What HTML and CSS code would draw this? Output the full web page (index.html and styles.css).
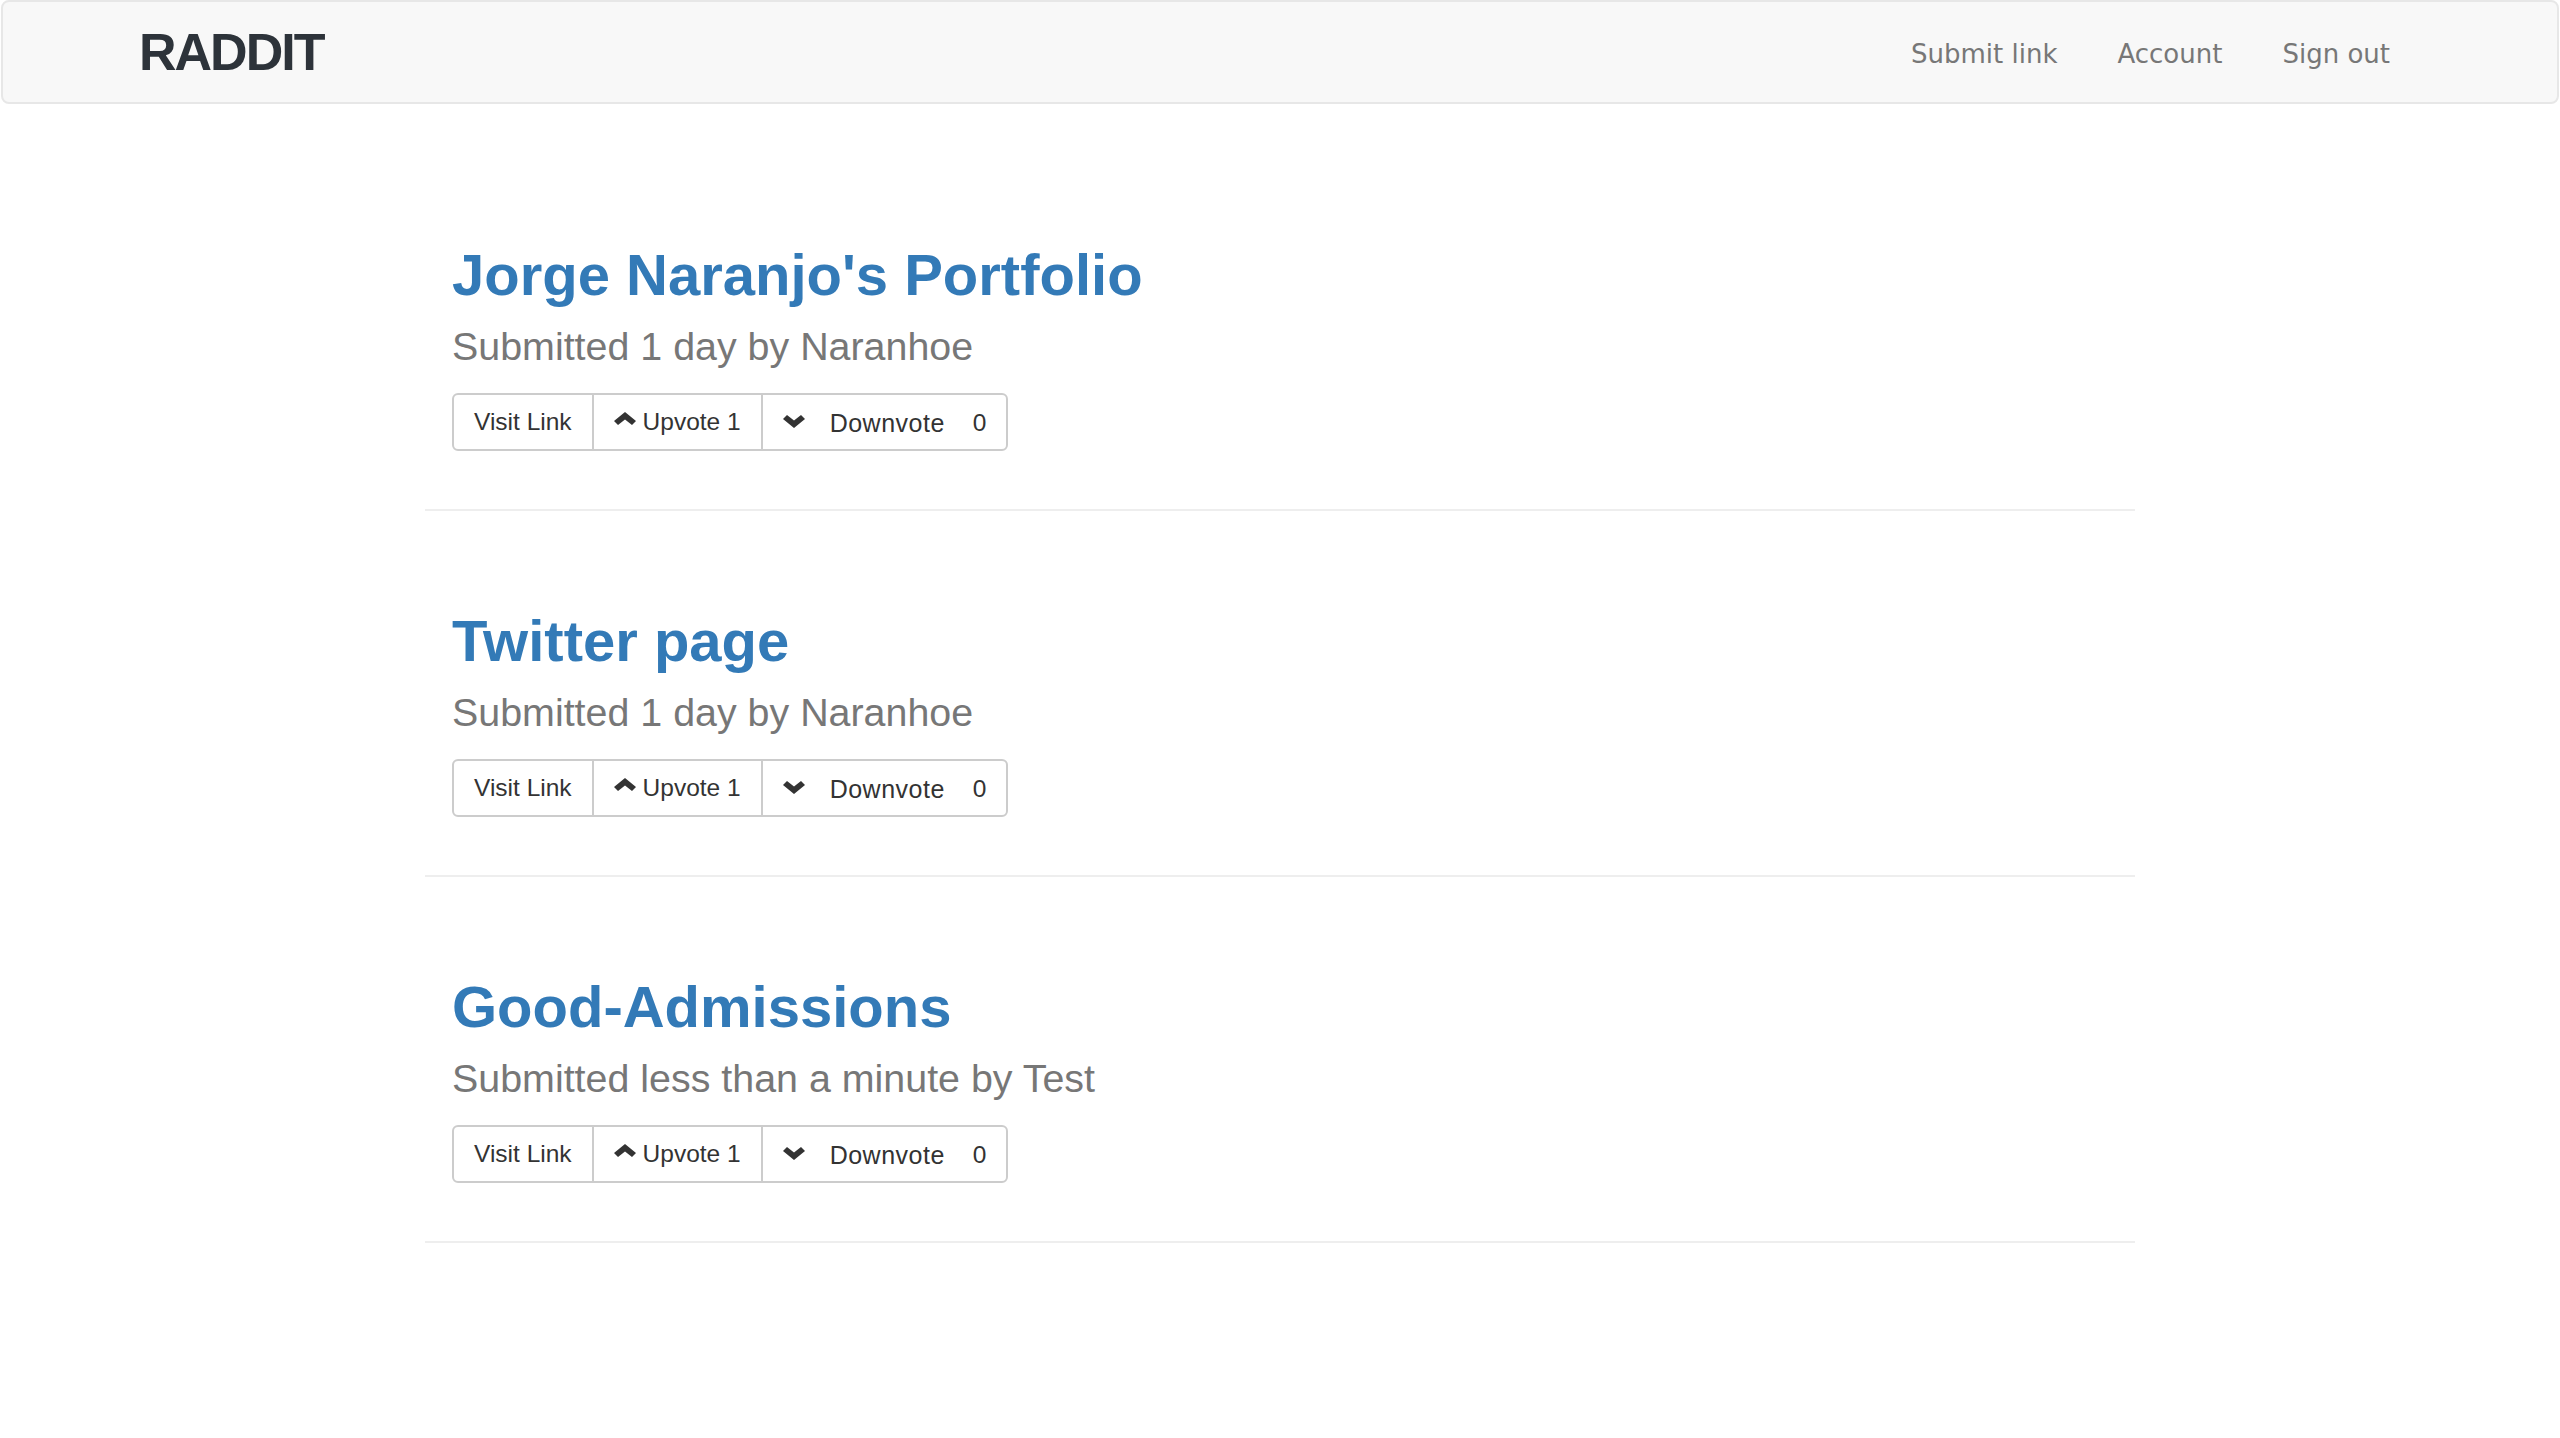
FILE: index.html
```html
<!DOCTYPE html>
<html lang="en">
<head>
<meta charset="utf-8">
<title>Raddit</title>
<link rel="stylesheet" href="styles.css">
</head>
<body>
<nav class="navbar">
  <a class="brand" href="#">RADDIT</a>
  <ul class="nav-links">
    <li><a href="#">Submit link</a></li>
    <li><a href="#">Account</a></li>
    <li><a href="#">Sign out</a></li>
  </ul>
</nav>
<main class="posts">
  <article class="post">
    <h2 class="post-title"><a href="#">Jorge Naranjo's Portfolio</a></h2>
    <p class="post-meta">Submitted 1 day by Naranhoe</p>
    <div class="btn-group">
      <a class="btn" href="#">Visit Link</a>
      <a class="btn" href="#"><svg class="chev chev-up" viewBox="0 0 22 13" width="22" height="13"><polygon points="11,0 22,9 18,13 11,7.5 4,13 0,9"/></svg>Upvote 1</a>
      <a class="btn" href="#"><svg class="chev chev-down" viewBox="0 0 22 13" width="22" height="13"><polygon points="11,13 22,4 18,0 11,5.5 4,0 0,4"/></svg><span class="down-label">Downvote</span><span class="count">0</span></a>
    </div>
  </article>
  <article class="post">
    <h2 class="post-title"><a href="#">Twitter page</a></h2>
    <p class="post-meta">Submitted 1 day by Naranhoe</p>
    <div class="btn-group">
      <a class="btn" href="#">Visit Link</a>
      <a class="btn" href="#"><svg class="chev chev-up" viewBox="0 0 22 13" width="22" height="13"><polygon points="11,0 22,9 18,13 11,7.5 4,13 0,9"/></svg>Upvote 1</a>
      <a class="btn" href="#"><svg class="chev chev-down" viewBox="0 0 22 13" width="22" height="13"><polygon points="11,13 22,4 18,0 11,5.5 4,0 0,4"/></svg><span class="down-label">Downvote</span><span class="count">0</span></a>
    </div>
  </article>
  <article class="post">
    <h2 class="post-title"><a href="#">Good-Admissions</a></h2>
    <p class="post-meta">Submitted less than a minute by Test</p>
    <div class="btn-group">
      <a class="btn" href="#">Visit Link</a>
      <a class="btn" href="#"><svg class="chev chev-up" viewBox="0 0 22 13" width="22" height="13"><polygon points="11,0 22,9 18,13 11,7.5 4,13 0,9"/></svg>Upvote 1</a>
      <a class="btn" href="#"><svg class="chev chev-down" viewBox="0 0 22 13" width="22" height="13"><polygon points="11,13 22,4 18,0 11,5.5 4,0 0,4"/></svg><span class="down-label">Downvote</span><span class="count">0</span></a>
    </div>
  </article>
</main>
</body>
</html>
```

FILE: styles.css
```css
html, body {
  margin: 0;
  padding: 0;
  background: #ffffff;
}

body {
  font-family: "Liberation Sans", Arial, Helvetica, sans-serif;
  color: #333333;
}

a {
  text-decoration: none;
}

/* ---------- Navbar ---------- */
.navbar {
  display: flex;
  align-items: center;
  justify-content: space-between;
  box-sizing: border-box;
  height: 104px;
  margin: 0 1px;
  padding: 0 137px 0 136px;
  background: #f8f8f8;
  border: 2px solid #e7e7e7;
  border-radius: 8px;
}

.brand {
  display: block;
  font-family: "Liberation Sans", Arial, sans-serif;
  font-weight: bold;
  font-size: 52px;
  line-height: 52px;
  letter-spacing: -2px;
  color: #2d333a;
}

.nav-links {
  display: flex;
  list-style: none;
  margin: 3px 0 0 0;
  padding: 0;
}

.nav-links a {
  display: block;
  padding: 0 30px;
  font-family: "DejaVu Sans", Verdana, sans-serif;
  font-size: 26px;
  line-height: 30px;
  color: #777777;
}

/* ---------- Posts ---------- */
.posts {
  width: 1710px;
  margin: 0 auto;
  padding-top: 41px;
}

.post {
  padding: 98px 0 58px 27px;
  border-bottom: 2px solid #eeeeee;
}

.post-title {
  margin: 0;
  font-size: 58px;
  line-height: 64px;
  font-weight: bold;
}

.post-title a {
  color: #337ab7;
}

.post-meta {
  margin: 17px 0 0 0;
  font-size: 39.4px;
  line-height: 44px;
  color: #777777;
}

/* ---------- Button group ---------- */
.btn-group {
  display: flex;
  width: max-content;
  margin-top: 25px;
}

.btn {
  display: block;
  box-sizing: border-box;
  height: 58px;
  padding: 0 20px;
  border: 2px solid #cccccc;
  background: #ffffff;
  color: #333333;
  font-size: 24.5px;
  line-height: 54px;
  white-space: nowrap;
}

.btn + .btn {
  margin-left: -2px;
}

.btn:first-child {
  border-radius: 6px 0 0 6px;
}

.btn:last-child {
  border-radius: 0 6px 6px 0;
}

.chev {
  fill: #333333;
}

.chev-up {
  vertical-align: 5px;
  margin-right: 7px;
}

.chev-down {
  vertical-align: 3px;
  margin-right: 25px;
}

.down-label {
  font-size: 25px;
  letter-spacing: 0.5px;
  position: relative;
  top: 1px;
}

.count {
  margin-left: 28px;
}
```
